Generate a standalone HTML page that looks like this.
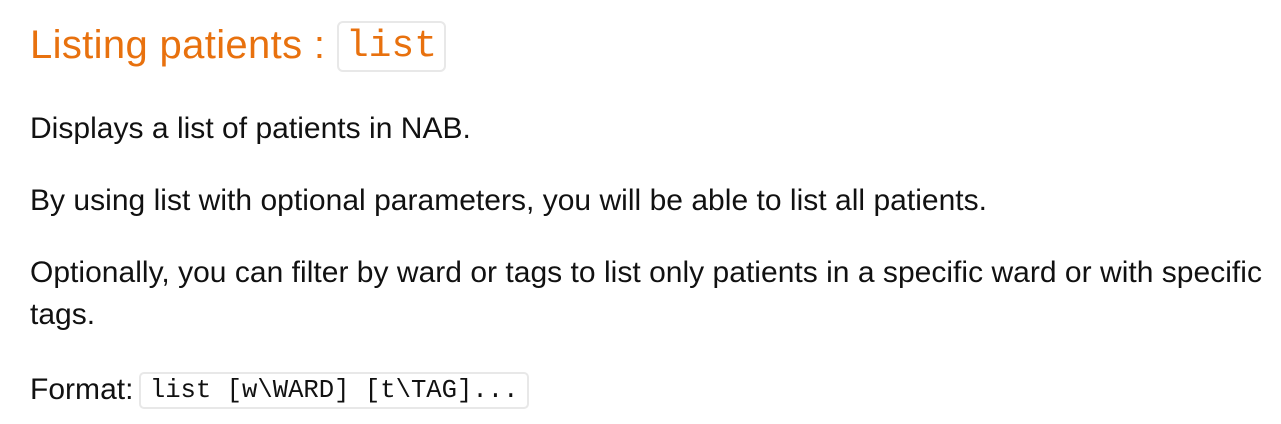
<!DOCTYPE html>
<html><head><meta charset="utf-8"><style>
html,body{margin:0;padding:0;background:#fff;width:1281px;height:424px;overflow:hidden}
body{font-family:"Liberation Sans",sans-serif;color:#111;}
h1{position:absolute;left:30px;top:14px;margin:0;font-weight:normal;font-size:40px;color:#e8710e;letter-spacing:0.35px;white-space:nowrap;line-height:62px}
h1 code{font-family:"Liberation Mono",monospace;font-size:38px;letter-spacing:0;border:2px solid #e8e8e8;border-radius:6px;padding:2px 7px;vertical-align:2px}
p{position:absolute;left:30px;margin:0;font-size:30px;letter-spacing:0.02px;white-space:nowrap;line-height:42px}
.f code{font-family:"Liberation Mono",monospace;font-size:25.6px;letter-spacing:0;border:2px solid #e8e8e8;border-radius:5px;padding:2px 9px;color:#111;vertical-align:2px}
</style></head><body>
<h1>Listing patients : <code>list</code></h1>
<p style="top:108px">Displays a list of patients in NAB.</p>
<p style="top:180px">By using list with optional parameters, you will be able to list all patients.</p>
<p style="top:252px">Optionally, you can filter by ward or tags to list only patients in a specific ward or with specific<br>tags.</p>
<p class="f" style="top:369px">Format: <code style="margin-left:-3px">list [w\WARD] [t\TAG]...</code></p>
</body></html>
